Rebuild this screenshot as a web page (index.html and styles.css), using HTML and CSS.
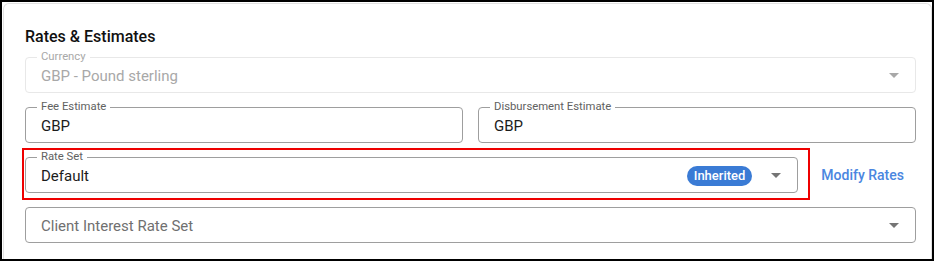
FILE: index.html
```html
<!DOCTYPE html>
<html lang="en">
<head>
    <meta charset="UTF-8">
    <meta name="viewport" content="width=device-width, initial-scale=1.0">
    <title>Rates &amp; Estimates</title>
    <link rel="stylesheet" href="styles.css">
</head>
<body>
    <div class="frame">
        <div class="card">
            <h2 class="title">Rates &amp; Estimates</h2>

            <div class="field field-disabled">
                <span class="label">Currency</span>
                <span class="value">GBP - Pound sterling</span>
                <span class="arrow"></span>
            </div>

            <div class="row-two">
                <div class="field">
                    <span class="label">Fee Estimate</span>
                    <span class="value">GBP</span>
                </div>
                <div class="field">
                    <span class="label">Disbursement Estimate</span>
                    <span class="value">GBP</span>
                </div>
            </div>

            <div class="rate-row">
                <div class="field">
                    <span class="label">Rate Set</span>
                    <span class="value">Default</span>
                    <span class="pill">Inherited</span>
                    <span class="arrow"></span>
                </div>
                <a class="link" href="#">Modify Rates</a>
                <div class="highlight"></div>
            </div>

            <div class="field">
                <span class="value placeholder">Client Interest Rate Set</span>
                <span class="arrow"></span>
            </div>
        </div>
    </div>
</body>
</html>
```

FILE: styles.css
```css
body {
    margin: 0;
    font-family: Roboto, "Liberation Sans", Arial, sans-serif;
    background: #ffffff;
}
.frame {
    height: 261px;
    border: 2px solid #000000;
    box-sizing: border-box;
    padding: 1px 0 0 1px;
    overflow: hidden;
}
.card {
    height: 100%;
    box-sizing: border-box;
    border: 1px solid #e2e2e2;
    border-bottom: none;
    border-radius: 6px 6px 0 0;
    padding: 23px 15px 0 21px;
    background: #ffffff;
}
.title {
    margin: 0 0 10px 0;
    font-size: 16px;
    line-height: 20px;
    font-weight: 500;
    color: #111111;
}
.field {
    position: relative;
    display: flex;
    align-items: center;
    height: 36px;
    box-sizing: border-box;
    border: 1px solid #9e9e9e;
    border-radius: 4px;
    padding: 1px 16px 0 15px;
    margin-bottom: 14px;
}
.label {
    position: absolute;
    top: -7px;
    left: 11px;
    padding: 0 4px;
    background: #ffffff;
    font-size: 11.3px;
    line-height: 12px;
    color: #616161;
}
.value {
    flex: 1;
    font-size: 15px;
    color: #1c1c1c;
}
.placeholder {
    color: #707070;
}
.arrow {
    width: 0;
    height: 0;
    border-left: 5px solid transparent;
    border-right: 5px solid transparent;
    border-top: 5px solid #757575;
}
.field-disabled {
    border-color: #e8e8e8;
}
.field-disabled .label,
.field-disabled .value {
    color: #a8a8a8;
}
.field-disabled .arrow {
    border-top-color: #a8a8a8;
}
.row-two {
    display: grid;
    grid-template-columns: 1fr 1fr;
    column-gap: 15px;
}
.rate-row {
    position: relative;
    display: flex;
    margin-bottom: 14px;
}
.rate-row .field {
    flex: 1;
    margin-bottom: 0;
}
.pill {
    background: #3a7bd5;
    color: #ffffff;
    font-size: 13px;
    font-weight: 500;
    line-height: 20px;
    padding: 0 7px;
    border-radius: 10px;
    margin-right: 19px;
}
.link {
    align-self: center;
    margin-left: 12px;
    padding: 0 12px 0 11px;
    font-size: 14px;
    font-weight: 500;
    color: #4a86e0;
    text-decoration: none;
}
.highlight {
    position: absolute;
    top: -9px;
    bottom: -7px;
    left: -3px;
    right: 106px;
    border: 2px solid #ee0000;
    pointer-events: none;
}
```
